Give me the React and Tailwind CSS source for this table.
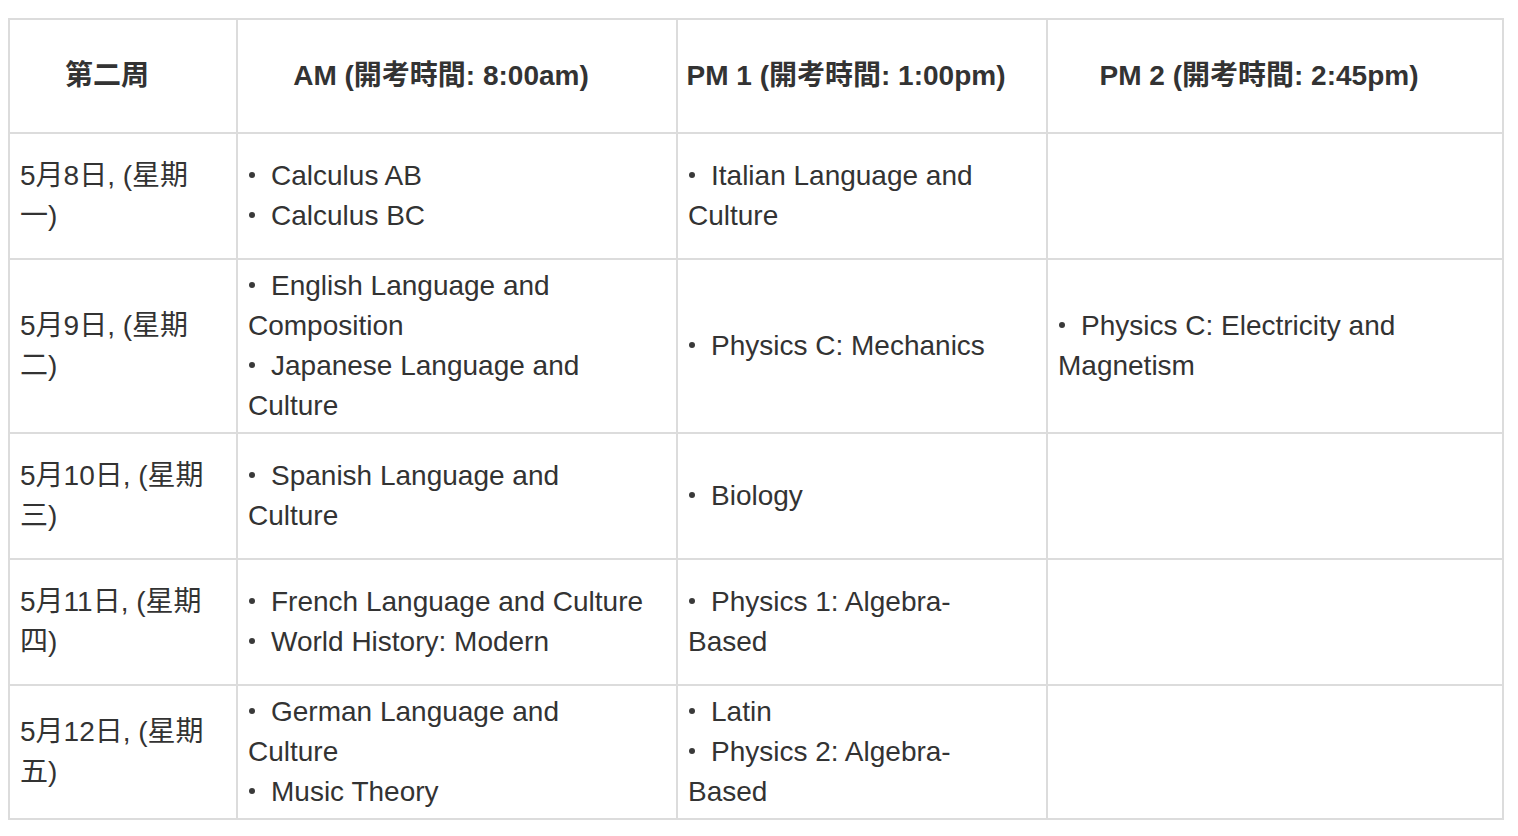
import React from "react";

const rows = [
  {
    h: "h-[126px]",
    day: "5月8日, (星期一)",
    am: ["Calculus AB", "Calculus BC"],
    pm1: ["Italian Language and Culture"],
    pm2: [],
  },
  {
    h: "h-[174px]",
    day: "5月9日, (星期二)",
    am: ["English Language and Composition", "Japanese Language and Culture"],
    pm1: ["Physics C: Mechanics"],
    pm2: ["Physics C: Electricity and Magnetism"],
  },
  {
    h: "h-[126px]",
    day: "5月10日, (星期三)",
    am: ["Spanish Language and Culture"],
    pm1: ["Biology"],
    pm2: [],
  },
  {
    h: "h-[126px]",
    day: "5月11日, (星期四)",
    am: ["French Language and Culture", "World History: Modern"],
    pm1: ["Physics 1: Algebra-Based"],
    pm2: [],
  },
  {
    h: "h-[134px]",
    day: "5月12日, (星期五)",
    am: ["German Language and Culture", "Music Theory"],
    pm1: ["Latin", "Physics 2: Algebra-Based"],
    pm2: [],
  },
];

function Items({ items }) {
  return (
    <div>
      {items.map((t) => (
        <div key={t}>
          <span className="inline-block w-[6px] h-[6px] rounded-full bg-[#3a3a3a] ml-[1px] mr-[16px] align-[7px]"></span>
          {t}
        </div>
      ))}
    </div>
  );
}

const cell = "border-r-2 border-b-2 border-[#dcdcdc] flex items-center";

export default function App() {
  const headers = ["第二周", "AM (開考時間: 8:00am)", "PM 1 (開考時間: 1:00pm)", "PM 2 (開考時間: 2:45pm)"];
  return (
    <div
      className="w-[1518px] h-[836px] bg-white pt-[18px] pl-[8px] text-[#333333] text-[28px] leading-[40px]"
      style={{ fontFamily: '"Liberation Sans", Arial, "Noto Sans CJK TC", sans-serif' }}
    >
      <div className="grid grid-cols-[228px_440px_370px_456px] w-[1496px] border-l-2 border-t-2 border-[#dcdcdc]">
        {headers.map((h) => (
          <div key={h} className={`${cell} h-[114px] justify-center pl-[10px] pr-[42px] font-bold text-center`}>
            <div className="whitespace-nowrap">{h}</div>
          </div>
        ))}
        {rows.map((r) => (
          <React.Fragment key={r.day}>
            <div className={`${cell} ${r.h} pl-[10px] pr-[14px]`}>
              <div>{r.day}</div>
            </div>
            <div className={`${cell} ${r.h} pl-[10px] pr-[28px]`}>
              <Items items={r.am} />
            </div>
            <div className={`${cell} ${r.h} pl-[10px] pr-[28px]`}>
              <Items items={r.pm1} />
            </div>
            <div className={`${cell} ${r.h} pl-[10px] pr-[28px]`}>
              <Items items={r.pm2} />
            </div>
          </React.Fragment>
        ))}
      </div>
    </div>
  );
}
